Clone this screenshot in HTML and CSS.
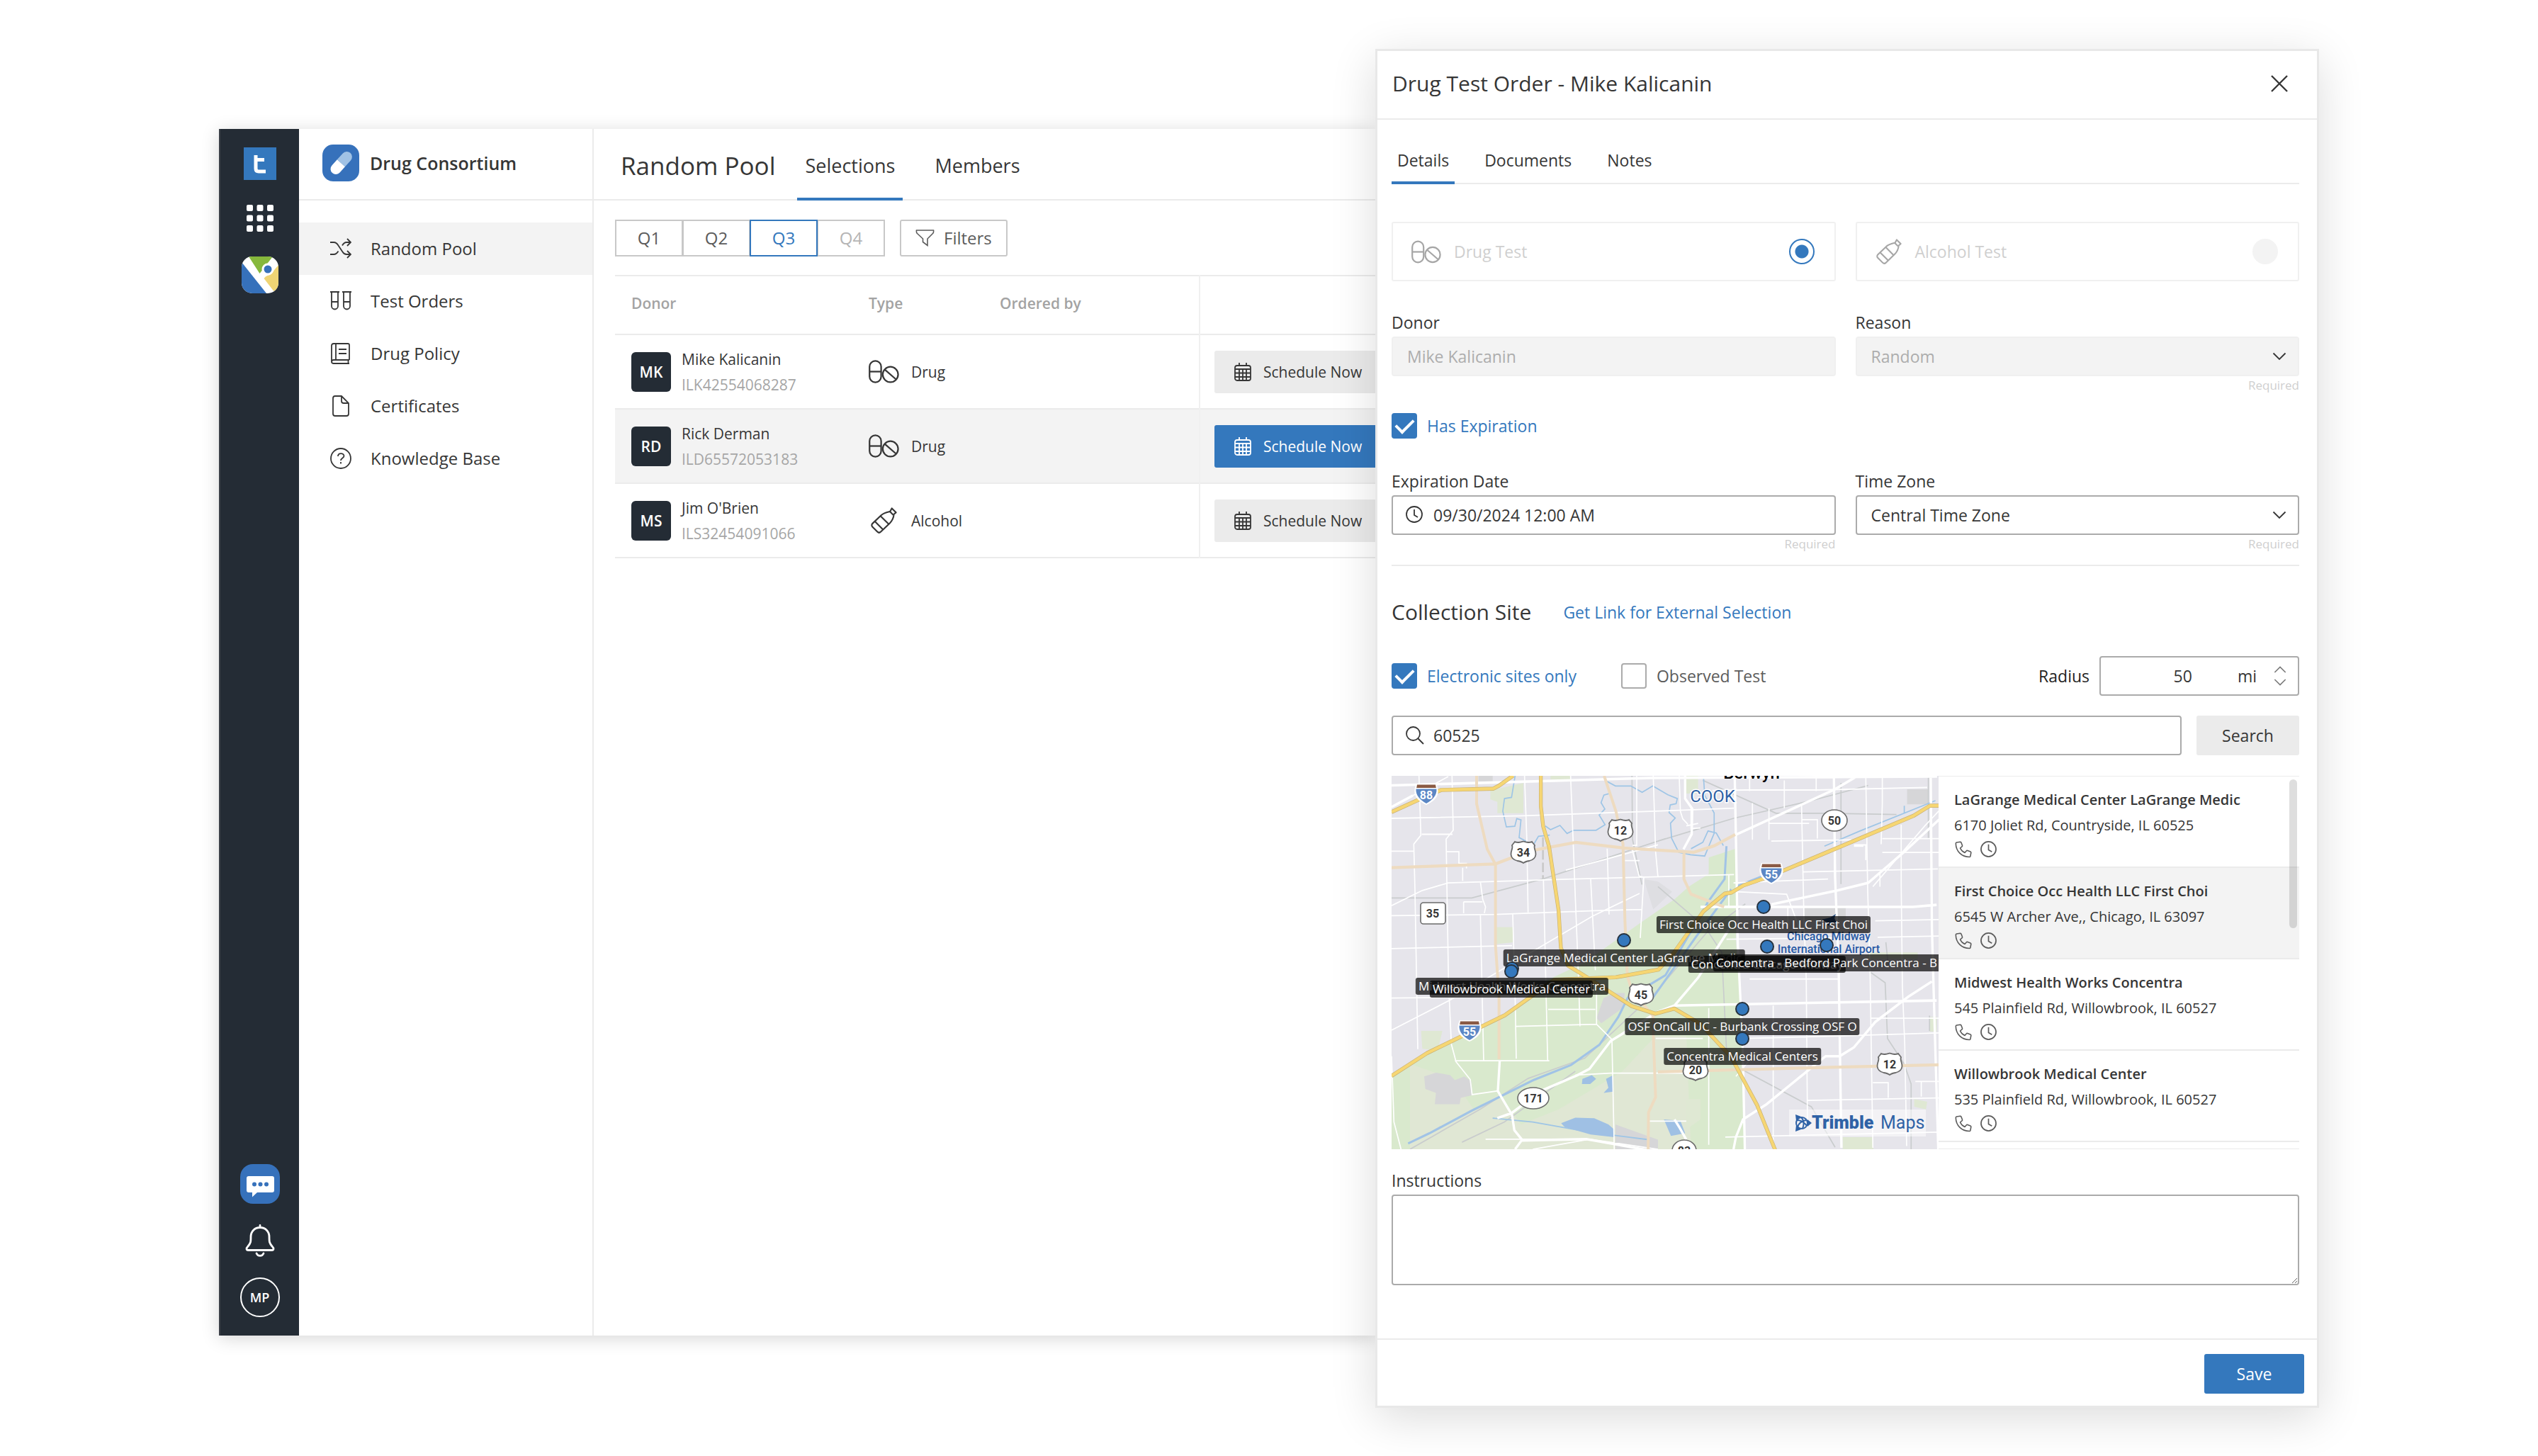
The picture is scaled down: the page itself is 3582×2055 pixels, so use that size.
FILE: index.html
```html
<!DOCTYPE html>
<html lang="en">

<head>
    <meta charset="UTF-8">
    <meta name="viewport" content="width=device-width, initial-scale=1.0">
    <title>Drug Consortium - Random Pool</title>
    <link rel="stylesheet" href="styles.css">
</head>

<body>
    <!-- shared icons -->
    <svg class="sprite" aria-hidden="true">
        <symbol id="i-pills" viewBox="0 0 42 32">
            <g fill="none" stroke="currentColor" stroke-width="2.2">
                <rect x="1.2" y="1.2" width="16" height="29.6" rx="8" />
                <path d="M1.2 16h16" />
                <circle cx="30" cy="20" r="10.6" />
                <path d="M22.5 13.5l15 13" />
            </g>
        </symbol>
        <symbol id="i-bottle" viewBox="0 0 38 38">
            <g fill="none" stroke="currentColor" stroke-width="2.2" stroke-linejoin="round">
                <path d="M30.5 1.5l6 6-3 2.5c-.5 6-2 9-6 13L14.500 35.500c-1.500 1.500-3.500 1.500-5 0L2.500 28.500c-1.500-1.500-1.500-3.500 0-5L15 11.500c4-3.500 7-4 13-5.500z" />
                <path d="M27.500 6l5 5M6 20.500l12 12M14 12.500l12 12" />
            </g>
        </symbol>
        <symbol id="i-calendar" viewBox="0 0 24 26">
            <g fill="none" stroke="currentColor" stroke-width="1.8">
                <rect x="1" y="4" width="22" height="21" rx="3" />
                <path d="M1 9h22M1 14.500h22M1 20h22M7 9v16M12 9v16M17 9v16M7 0v4M17 0v4" />
            </g>
        </symbol>
        <symbol id="i-clock" viewBox="0 0 24 24">
            <g fill="none" stroke="currentColor" stroke-width="1.8">
                <circle cx="12" cy="12" r="11" />
                <path d="M12 5v8l5 3" />
            </g>
        </symbol>
        <symbol id="i-phone" viewBox="0 0 24 24">
            <path d="M2.500 2l5-.8c.8 0 1.200.3 1.500 1l1.500 4c.2.700 0 1.300-.5 1.700L7.500 10c1.300 3 3.500 5.200 6.500 6.500l2.200-2.500c.400-.500 1-.7 1.700-.5l4 1.500c.7.300 1 .8.9 1.500l-.9 5c-.2.700-.7 1-1.400 1C9.500 22.500 1.500 14.500 1.300 3.500c0-.7.500-1.300 1.200-1.500z" fill="none" stroke="currentColor" stroke-width="1.600" stroke-linejoin="round" />
        </symbol>
        <symbol id="i-chevron" viewBox="0 0 20 12">
            <path d="M1.500 1.500l8.500 8.500 8.500-8.500" fill="none" stroke="currentColor" stroke-width="1.800" />
        </symbol>
        <symbol id="s-interstate" viewBox="0 0 36 32">
            <path d="M4 1h28c2 5 3 9 2.500 13-1 8-8 13-16.500 17C9.500 27 2.500 22 1.500 14 1 9 2 6 4 1z" fill="#fff" />
            <path d="M5 2.500h26l.8 4.500H4.200z" fill="#8a5a44" />
            <path d="M3.500 8.500h29c.5 9-5 15-14.500 20.500C8.500 23.500 3 17.500 3.500 8.500z" fill="#5b87c5" />
        </symbol>
        <symbol id="s-us" viewBox="0 0 38 34">
            <path d="M7 2c4 2 7 1 12-.5C24 3 27 4 31 2l4 5c-2 4 2 8 1.500 13-.5 6-5 8-9 9-3 .5-6 1-8.500 3-2.500-2-5.500-2.500-8.500-3-4-1-8.500-3-9-9C1 15 5 11 3 7z" fill="#fff" stroke="#6b6b6b" stroke-width="1.800" />
        </symbol>
    </svg>

    <div class="stage">
        <div class="app">
            <nav class="rail" aria-label="Applications">
                <a href="#" class="rail-link" aria-label="Home">
                    <svg width="46" height="46" viewBox="0 0 46 46">
                        <rect width="46" height="46" fill="#3478bd" />
                        <path d="M17 11v19q0 4 4 4h10M17 17.500h12" fill="none" stroke="#fff" stroke-width="5" />
                    </svg>
                </a>
                <a href="#" class="rail-link" aria-label="All apps">
                    <svg width="38" height="38" viewBox="0 0 38 38" fill="#fff">
                        <rect width="9" height="9" rx="2" /><rect x="14.500" width="9" height="9" rx="2" /><rect x="29" width="9" height="9" rx="2" />
                        <rect y="14.500" width="9" height="9" rx="2" /><rect x="14.500" y="14.500" width="9" height="9" rx="2" /><rect x="29" y="14.500" width="9" height="9" rx="2" />
                        <rect y="29" width="9" height="9" rx="2" /><rect x="14.500" y="29" width="9" height="9" rx="2" /><rect x="29" y="29" width="9" height="9" rx="2" />
                    </svg>
                </a>
                <a href="#" class="rail-link" aria-label="Maps">
                    <svg width="52" height="52" viewBox="0 0 52 52">
                        <clipPath id="tile"><rect width="52" height="52" rx="15" /></clipPath>
                        <g clip-path="url(#tile)">
                            <rect width="52" height="52" fill="#fff" />
                            <path d="M10 0h34L25.500 24z" fill="#86b83c" />
                            <path d="M0 8l35 44H0z" fill="#3671bb" />
                            <path d="M52 12v37l-7-.5L31.500 31q2-3 5-4 6-1 8-6z" fill="#efd474" />
                            <circle cx="37" cy="18" r="8.500" fill="#fff" />
                            <circle cx="37" cy="18" r="5.500" fill="#3671bb" />
                        </g>
                    </svg>
                </a>
                <a href="#" class="rail-link rail-chat" aria-label="Messages">
                    <svg width="56" height="56" viewBox="0 0 56 56">
                        <rect width="56" height="56" rx="18" fill="#3671bb" />
                        <path d="M12 17h33q3 0 3 3v17q0 3-3 3H24l-7 6.500V40h-5q-3 0-3-3V20q0-3 3-3z" fill="#fff" />
                        <g fill="#3671bb"><circle cx="20" cy="28.500" r="3" /><circle cx="28.500" cy="28.500" r="3" /><circle cx="37" cy="28.500" r="3" /></g>
                    </svg>
                </a>
                <a href="#" class="rail-link" aria-label="Notifications">
                    <svg width="42" height="46" viewBox="0 0 42 46" fill="none" stroke="#fff" stroke-width="2.800" stroke-linecap="round">
                        <path d="M21 1.500v3M21 4.500c-7.500 0-13 5.500-13 13 0 7 0 9-4 13.500-3 3-2.500 5.500.5 5.500h33c3 0 3.500-2.500.5-5.500-4-4.500-4-6.500-4-13.500 0-7.500-5.500-13-13-13zM16 41c2 4.500 8 4.500 10 0" />
                    </svg>
                </a>
                <a href="#" class="rail-user">MP</a>
            </nav>

            <aside class="sidebar">
                <div class="brand">
                    <svg width="52" height="52" viewBox="0 0 52 52">
                        <rect width="52" height="52" rx="15" fill="#3671bb" />
                        <g transform="rotate(42 26 26)">
                            <path d="M19 26V14a7.500 7.500 0 0 1 15 0v12z" fill="#a0c2e5" />
                            <path d="M19 26h15v11a7.500 7.500 0 0 1-15 0z" fill="#fff" />
                        </g>
                    </svg>
                    <span>Drug Consortium</span>
                </div>
                <ul class="menu">
                    <li><a href="#" class="active">
                        <svg width="30" height="30" viewBox="0 0 30 30"><path d="M0 6h5c3 0 5 2 6.500 4.500l6 9c1.500 2.500 3 3.500 5.500 3.500h6M0 23h5c3 0 5-2 6.500-4.500M17 10.500C18.500 8 20 6 23 6h6M24 1l5 5-5 5M24 18l5 5-5 5" /></svg>
                        Random Pool</a></li>
                    <li><a href="#">
                        <svg width="30" height="30" viewBox="0 0 30 30"><path d="M0 2h13M17 2h13M2 2v20a4.500 4.500 0 0 0 9 0V2M19 2v20a4.500 4.500 0 0 0 9 0V2M2 16h9M19 16h9" /></svg>
                        Test Orders</a></li>
                    <li><a href="#">
                        <svg width="30" height="30" viewBox="0 0 30 30"><path d="M27 24H5q-3 0-3 2.500T5 29h22M25.500 24v5M27 24V3q0-2-2-2H5Q2 1 2 4v22M8 1v23M12 9h11M12 15h11" /></svg>
                        Drug Policy</a></li>
                    <li><a href="#">
                        <svg width="30" height="30" viewBox="0 0 30 30"><path d="M16 1H7Q4 1 4 4v22q0 3 3 3h16q3 0 3-3V11zM16 1v7q0 3 3 3h7" /></svg>
                        Certificates</a></li>
                    <li><a href="#">
                        <svg width="30" height="30" viewBox="0 0 30 30"><circle cx="15" cy="15" r="14" /><path d="M11 12c0-5 8.500-5 8.500-.5 0 3-4.500 3-4.500 6.500M15 20v2.500" /></svg>
                        Knowledge Base</a></li>
                </ul>
            </aside>

            <main class="main">
                <header class="main-header">
                    <h1>Random Pool</h1>
                    <a href="#" class="main-tab active">Selections</a>
                    <a href="#" class="main-tab">Members</a>
                </header>
                <div class="toolbar">
                    <div class="quarters">
                        <button type="button">Q1</button>
                        <button type="button">Q2</button>
                        <button type="button" class="selected">Q3</button>
                        <button type="button" disabled>Q4</button>
                    </div>
                    <button type="button" class="filters">
                        <svg width="27" height="24" viewBox="0 0 27 24"><path d="M1.500 1h24q.5 3-1 4.500L17 13v9.500l-6.500-5V13L2.500 5.500Q1 4 1.500 1z" fill="none" stroke="currentColor" stroke-width="1.600" /></svg>
                        Filters
                    </button>
                </div>
                <table class="pool">
                    <thead>
                        <tr>
                            <th class="col-donor">Donor</th>
                            <th class="col-type">Type</th>
                            <th class="col-by">Ordered by</th>
                            <th class="col-action" aria-label="Action"></th>
                        </tr>
                    </thead>
                    <tbody>
                        <tr>
                            <td><div class="donor"><span class="avatar">MK</span><span>Mike Kalicanin<br><small>ILK42554068287</small></span></div></td>
                            <td><div class="type"><svg width="43" height="33"><use href="#i-pills" /></svg>Drug</div></td>
                            <td></td>
                            <td class="action"><button type="button" class="schedule"><svg width="24" height="26"><use href="#i-calendar" /></svg>Schedule Now</button></td>
                        </tr>
                        <tr class="current">
                            <td><div class="donor"><span class="avatar">RD</span><span>Rick Derman<br><small>ILD65572053183</small></span></div></td>
                            <td><div class="type"><svg width="43" height="33"><use href="#i-pills" /></svg>Drug</div></td>
                            <td></td>
                            <td class="action"><button type="button" class="schedule primary"><svg width="24" height="26"><use href="#i-calendar" /></svg>Schedule Now</button></td>
                        </tr>
                        <tr>
                            <td><div class="donor"><span class="avatar">MS</span><span>Jim O'Brien<br><small>ILS32454091066</small></span></div></td>
                            <td><div class="type"><svg width="43" height="37"><use href="#i-bottle" /></svg>Alcohol</div></td>
                            <td></td>
                            <td class="action"><button type="button" class="schedule"><svg width="24" height="26"><use href="#i-calendar" /></svg>Schedule Now</button></td>
                        </tr>
                    </tbody>
                </table>
            </main>
        </div>

        <form class="drawer" aria-labelledby="drawer-title">
            <header class="drawer-header">
                <h2 id="drawer-title">Drug Test Order - Mike Kalicanin</h2>
                <button type="button" class="close" aria-label="Close">
                    <svg width="24" height="24" viewBox="0 0 24 24"><path d="M1 1l22 22M23 1L1 23" stroke="currentColor" stroke-width="2.400" /></svg>
                </button>
            </header>

            <div class="drawer-body">
                <nav class="tabs">
                    <a href="#" class="active">Details</a>
                    <a href="#">Documents</a>
                    <a href="#">Notes</a>
                </nav>

                <div class="row cards">
                    <label class="card">
                        <svg width="42" height="33"><use href="#i-pills" /></svg>
                        <span>Drug Test</span>
                        <input type="radio" name="test" checked>
                    </label>
                    <label class="card">
                        <svg width="38" height="36"><use href="#i-bottle" /></svg>
                        <span>Alcohol Test</span>
                        <input type="radio" name="test" disabled>
                    </label>
                </div>

                <div class="row donor-row">
                    <div class="field">
                        <label for="donor">Donor</label>
                        <input type="text" id="donor" value="Mike Kalicanin" disabled>
                    </div>
                    <div class="field">
                        <label for="reason">Reason</label>
                        <div class="control">
                            <select id="reason" disabled>
                                <option>Random</option>
                            </select>
                            <svg class="chevron" width="20" height="12"><use href="#i-chevron" /></svg>
                        </div>
                        <span class="hint">Required</span>
                    </div>
                </div>

                <label class="check expiration-check"><input type="checkbox" checked><span>Has Expiration</span></label>

                <div class="row">
                    <div class="field">
                        <label for="expiration">Expiration Date</label>
                        <div class="control with-icon">
                            <svg class="lead" width="24" height="24"><use href="#i-clock" /></svg>
                            <input type="text" id="expiration" value="09/30/2024 12:00 AM">
                        </div>
                        <span class="hint">Required</span>
                    </div>
                    <div class="field">
                        <label for="zone">Time Zone</label>
                        <div class="control">
                            <select id="zone">
                                <option>Central Time Zone</option>
                            </select>
                            <svg class="chevron" width="20" height="12"><use href="#i-chevron" /></svg>
                        </div>
                        <span class="hint">Required</span>
                    </div>
                </div>

                <section class="site">
                    <div class="site-title">
                        <h3>Collection Site</h3>
                        <a href="#">Get Link for External Selection</a>
                    </div>
                    <div class="site-options">
                        <label class="check"><input type="checkbox" checked><span>Electronic sites only</span></label>
                        <label class="check"><input type="checkbox"><span>Observed Test</span></label>
                        <label for="radius" class="radius-label">Radius</label>
                        <div class="radius">
                            <input type="number" id="radius" value="50">
                            <span>mi</span>
                            <div class="steps">
                                <button type="button" aria-label="Increase"><svg class="up" width="18" height="12"><use href="#i-chevron" /></svg></button>
                                <button type="button" aria-label="Decrease"><svg width="18" height="12"><use href="#i-chevron" /></svg></button>
                            </div>
                        </div>
                    </div>
                    <div class="search-row">
                        <div class="control with-icon">
                            <svg class="lead" width="26" height="26" viewBox="0 0 26 26"><path d="M17.500 17.500L25 25M20 10.500a9.500 9.500 0 1 1-19 0 9.500 9.500 0 0 1 19 0z" fill="none" stroke="currentColor" stroke-width="1.800" /></svg>
                            <input type="text" aria-label="Zip code" value="60525">
                        </div>
                        <button type="button" class="search">Search</button>
                    </div>

                    <div class="finder">
                        <div class="map">
                            <svg class="map-art" viewBox="0 0 772 527" preserveAspectRatio="xMidYMid slice">
                                <rect width="772" height="527" fill="#e6e5eb" />
                                <g transform="scale(.3333 .3571) translate(-42 -42)" fill="none">
                                    <!-- green areas -->
                                    <path d="M42 1230L200 1130 330 1080 540 980 640 910 700 850 860 780 1100 620 1240 530 1300 480 1385 430V365L1500 330V690L1520 950 1538 1518H42z" fill="#d9e9cd" />
                                    <path d="M120 1180l180 60 90 120 110-60 90 120 160-60 270-150 140-140h130l20 448H120z" fill="#e0e7d4" />
                                    <path d="M460 100l140-30v120H490V145l-30-10zM715 42h85v15h-85zM480 640h75v60l-75 8zM167 1050h90l-20 80-65-10zM1952 1470h130v48h-130zM2255 1320l55 10-5 30-50-10zM2320 995h30v58h-30zM2060 740h210v25h-210zM1290 1320h60v80l-60 40zM1290 42h50v70h-50z" fill="#dfe8d3" />
                                    <path d="M180 1230l50-15 60 10 20 20 40-15 30 20v55l-45 10-5 25H225l5-45-45-15zM910 1000l30-80 50-20h40l-10 60-90 60zM1790 555h175v60h-175zM2225 95h90v60h-90zM410 42h60v22h-60zM990 1420l180 60v38H990z" fill="#d6d6d8" />
                                    <path d="M1110 450l60 10 60 40-80 70z" fill="#dedee2" />
                                    <!-- railways -->
                                    <path d="M42 525h340l300-75 520-160M1060 42l2 250 40 180M1170 300l320-90 330-70 240-60M1360 60l310 130h220l290 5M1170 480l200 160 70 100 20 380M2072 820l60 40 10 220 70 100 30 80v260M2145 790l-10-90M2320 1050v-60M1520 1200l300 150 100 160M1945 70v400M2315 42v250M120 1518l300-160 200-120 240-80 300-260 220-240 160-110M340 1490l180-80 300-200" stroke="#c9cccd" stroke-width="5" />
                                    <path d="M683 285v165" stroke="#c6c6c6" stroke-width="7" stroke-dasharray="38 12" />
                                    <!-- waterways -->
                                    <path d="M565 42l-15 85-30 5-7 50 15 62 36-3 8-30 18 5-8 70 60 30 22-35 48-5M693 240l22 15 40-17 30 32 28-13h95l38-22-25-38 24-24-16-25 12-30 30-8M950 62l40 20h65l48 25 45-25 64 35 40 15-5 20-25 5-5 30 26 22-20 20 5 60 30 55 50 10 60 5 40-90 0-80-40-70-5-70M1310 330l50-25 22-45 35 8 30 50M2345 140l-320 120-150 60M2213 160v30M470 1395l170 15 240 40 250 30" stroke="#9ec5e6" stroke-width="5" />
                                    <path d="M1460 320l-8 130-70 90-30 50-150 240-160 90-40 75-80 110-120 80-160 60-260 120-180 90-90 40M1500 480l110-40M1480 490l-150 190-190 250" stroke="#a1c3e6" stroke-width="9" />
                                    <path d="M760 1415l60-22 80 2 60 25 25 20v30l-100-10-110-30zM850 1240l40-15 18 15-25 20h-35zM950 1240l30-15v65l-40 5 20-20zM1195 1400l70 5 20 50-60 10z" fill="#9fc0e4" />
                                    <!-- streets -->
                                    <g stroke="#fff" stroke-width="5">
                                        <path d="M158 42l8 235-30 35 5 180 12 630M298 42l5 215-30 35 10 560 12 250 20 70 60 70 8 60 110-15M605 42l10 260 5 280M800 42l20 480 12 280 8 230M42 210l560-10 600-20 290-10M42 555l130-60 110-30 530-15 390-10 290-8M42 595l440-5 420-15 200-5M42 725l510-12M42 920l500-5M42 340h95M170 273h130M275 342h52v46h32v20M343 405v52M418 460l10 70 12 30-5 25M347 540h80M347 540v45M418 590l14 580M555 590l10 320 5 250M885 450l20 360M955 330l8 260M685 450l18 720M310 1168h400M570 1032l340-8 65 60M705 965h200M910 900v125M975 1084l10 436M820 1225l150-8h370M1080 42v275h-18M1030 377h62M1060 330l30 108 20 5-15 240M1150 42l10 300 10 100M1130 1407h160M1160 1080h200M640 1518l240-40 290 40M440 1478h440M42 1150l10 260 30 108M42 1047l250-120 600-330 200-90M780 415l390-100M42 165l240-120" />
                                        <path d="M1340 230l-50 10M1400 100l140-2h300l470-10M1558 42v60M1570 150v145M1640 170v125M1705 60v110M1840 42v60M1778 160l10 440 10 250 5 560M1640 230h170M1780 215h65v75M2050 42l8 450 10 320 12 700M2120 42v110l-5 160M2260 1250h100M2000 315h50v60M2110 430v50M1650 300l340-5M1785 422l570-12M1490 465l400-15M2200 235v240l5 400 10 230 8 400M2040 320h-40M1455 1470l910-20M2090 615l270-5M2100 680l260-5M2285 1310v-60h70M2080 1255h65v60M1558 845h380M1658 950v570M1660 1160h150M1800 1325l560-10M1460 688l450-5M1470 560v-125M1310 170v80l40-2M1260 42l5 140 10 30 22 22M2080 480l220-240 60-60M1505 500l210 10 60 150M1540 1080l400-10 420-12M2070 1000h290M2120 290h240M2120 345h240M1590 1130l-90 100M1385 960v540M1720 560v80" />
                                    </g>
                                    <g stroke="#fff" stroke-width="10">
                                        <path d="M42 80l1110-30 1200-5M42 165l90-45M1285 42v90l30 40-2 100-35 60M1495 42l5 240 8 430 20 380 10 430M1915 42l5 400 15 350 12 720M2325 42l5 600 12 400 15 480M1500 275l420-180 90-50M1350 560h900l100-8M1650 550l280-55 130-30 150-120 150-130M1240 950l1110-20M1240 950l-70 25-200 115-90 110-50 25-150 60-130 90-60 20M500 1168l-8 120 60 95 10 60 35 40 270-5 300 50M595 1480l-30 38M1240 950l100-110 130-190M2330 855l-100 60-140 100-90 100-60 35h-60l-250 190-100 60-30 70-10 48M1240 1400l20 30 30 50" />
                                    </g>
                                    <!-- highways -->
                                    <path d="M402 42v110l45 180 35 60v320l15 200v250M42 405l440-15 140-50 200-35 200 22 300 17 85-25 90-45M942 42l50 140 30 130 8 300 10 220 20 60 90 100v60l10 260-30 60-2 184M1280 340v110l30 60 140 50M1170 1212l730-18 460-10" stroke="#eedbc0" stroke-width="12" />
                                    <g stroke-linejoin="round">
                                        <path d="M42 185l130-55 80-32 220-5 25-12 60-40M674 42v120l10 80 25 80 40 250 10 150 30 70 70 40 200 120 100 30 80-20 110 60 130 130 110 190 80 185M42 1228l150-90 330-150 120-80 90-60 260-10 180-30 60-60 130-170 90-70 30-5 50-28 110-35 610-240 70-40h40" stroke="#c9b175" stroke-width="16" />
                                        <path d="M42 185l130-55 80-32 220-5 25-12 60-40M674 42v120l10 80 25 80 40 250 10 150 30 70 70 40 200 120 100 30 80-20 110 60 130 130 110 190 80 185M42 1228l150-90 330-150 120-80 90-60 260-10 180-30 60-60 130-170 90-70 30-5 50-28 110-35 610-240 70-40h40" stroke="#f6d673" stroke-width="12" />
                                    </g>
                                </g>
                                <!-- road numbers -->
                                <g class="road">
                                    <use href="#s-interstate" x="31" y="10" width="36" height="32" /><text x="49" y="33" class="light">88</text>
                                    <use href="#s-interstate" x="92" y="344" width="36" height="32" /><text x="110" y="367" class="light">55</text>
                                    <use href="#s-interstate" x="518" y="122" width="36" height="32" /><text x="536" y="145" class="light">55</text>
                                    <use href="#s-us" x="167" y="91" width="38" height="34" /><text x="186" y="114">34</text>
                                    <use href="#s-us" x="304" y="60" width="38" height="34" /><text x="323" y="83">12</text>
                                    <use href="#s-us" x="333" y="292" width="38" height="34" /><text x="352" y="315">45</text>
                                    <use href="#s-us" x="410" y="398" width="38" height="34" /><text x="429" y="421">20</text>
                                    <use href="#s-us" x="684" y="390" width="38" height="34" /><text x="703" y="413">12</text>
                                    <g fill="#fff" stroke="#6b6b6b" stroke-width="1.600">
                                        <ellipse cx="200" cy="455" rx="22" ry="15" />
                                        <ellipse cx="625" cy="63" rx="18" ry="15" />
                                        <ellipse cx="413" cy="529" rx="17" ry="15" />
                                        <rect x="41" y="179" width="35" height="30" rx="4" />
                                    </g>
                                    <text x="200" y="461">171</text>
                                    <text x="625" y="69">50</text>
                                    <text x="413" y="535">83</text>
                                    <text x="58" y="200">35</text>
                                </g>
                                <path d="M607 203l12-3 8-5-2 6 3 6-8 1-4 4-1-5z" fill="#2c5282" />
                                <text class="town" x="508" y="4">Berwyn</text>
                                <text class="county" x="453" y="37">COOK</text>
                                <text class="airport" x="617" y="232">Chicago Midway</text>
                                <text class="airport" x="617" y="250">International Airport</text>
                                <rect x="561" y="471" width="193" height="38" fill="#fff" fill-opacity=".5" />
                                <g fill="none" stroke="#2f62a6" stroke-width="2">
                                    <circle cx="579" cy="490" r="8" />
                                    <path d="M572 486q8 0 14 8M573 496q2-8 12-10M578 482q6 6 2 16" />
                                </g>
                                <path d="M570 478l8 3-7 6zM593 490l-6-5v10zM570 502l8-3-7-6z" fill="#2f62a6" />
                                <text class="trimble" x="593" y="498">Trimble</text>
                                <text class="maps" x="690" y="498">Maps</text>
                            </svg>
                            <div class="pin pin-lagrange"><span>LaGrange Medical Center LaGrange Medic</span></div>
                            <div class="pin pin-midwest"><span>Midwest Health Works Concentra</span></div>
                            <div class="pin pin-willowbrook"><span>Willowbrook Medical Center</span></div>
                            <div class="pin pin-first"><span>First Choice Occ Health LLC First Choi</span></div>
                            <div class="pin pin-midway"><span>Concentra Chicago Midway</span></div>
                            <div class="pin pin-bedford"><span>Concentra - Bedford Park Concentra - B</span></div>
                            <div class="pin pin-osf"><span>OSF OnCall UC - Burbank Crossing OSF O</span></div>
                            <div class="pin pin-centers"><span>Concentra Medical Centers</span></div>
                        </div>
                        <ul class="sites">
                            <li>
                                <strong>LaGrange Medical Center LaGrange Medic</strong>
                                <span>6170 Joliet Rd, Countryside, IL 60525</span>
                                <div class="site-icons"><svg width="24" height="24"><use href="#i-phone" /></svg><svg width="23" height="23"><use href="#i-clock" /></svg></div>
                            </li>
                            <li class="current">
                                <strong>First Choice Occ Health LLC First Choi</strong>
                                <span>6545 W Archer Ave,, Chicago, IL 63097</span>
                                <div class="site-icons"><svg width="24" height="24"><use href="#i-phone" /></svg><svg width="23" height="23"><use href="#i-clock" /></svg></div>
                            </li>
                            <li>
                                <strong>Midwest Health Works Concentra</strong>
                                <span>545 Plainfield Rd, Willowbrook, IL 60527</span>
                                <div class="site-icons"><svg width="24" height="24"><use href="#i-phone" /></svg><svg width="23" height="23"><use href="#i-clock" /></svg></div>
                            </li>
                            <li>
                                <strong>Willowbrook Medical Center</strong>
                                <span>535 Plainfield Rd, Willowbrook, IL 60527</span>
                                <div class="site-icons"><svg width="24" height="24"><use href="#i-phone" /></svg><svg width="23" height="23"><use href="#i-clock" /></svg></div>
                            </li>
                        </ul>
                    </div>
                </section>

                <div class="field instructions">
                    <label for="instructions">Instructions</label>
                    <textarea id="instructions"></textarea>
                </div>
            </div>

            <footer class="drawer-footer">
                <button type="submit" class="save">Save</button>
            </footer>
        </form>
    </div>
</body>

</html>
```

FILE: styles.css
```css
* {
    box-sizing: border-box;
}

body {
    margin: 0;
    background: #fff;
    color: #363636;
    font-family: "Open Sans", "Noto Sans", sans-serif;
    font-size: 23px;
    line-height: 32px;
}

a {
    color: inherit;
    text-decoration: none;
}

button,
input,
select,
textarea {
    font: inherit;
    color: inherit;
}

button {
    border: none;
    border-radius: 3px;
    background: none;
    padding: 0;
    cursor: pointer;
}

svg {
    flex: none;
    display: block;
}

h1,
h2,
h3 {
    margin: 0;
    font-weight: 400;
}

ul {
    list-style: none;
    margin: 0;
    padding: 0;
}

.sprite {
    display: none;
}

.stage {
    display: grid;
    grid-template-columns: minmax(0, 1632fr) minmax(0, 1332fr);
    padding: 69px 309px;
}

/* application window */
.app {
    display: flex;
    margin: 113px 0 102px;
    overflow: hidden;
    background: #fff;
    box-shadow: 0 4px 24px rgba(0, 0, 0, 0.16);
}

.rail {
    flex: none;
    width: 113px;
    display: flex;
    flex-direction: column;
    align-items: center;
    padding: 26px 0;
    gap: 35px;
    background: #242c35;
    border-left: 2px solid #3b4048;
}

.rail-chat {
    margin-top: auto;
}

.rail-chat,
.rail-chat + .rail-link {
    margin-bottom: -6px;
}

.rail-user {
    width: 56px;
    height: 56px;
    border: 2px solid #fff;
    border-radius: 50%;
    color: #fff;
    font-size: 18px;
    font-weight: 600;
    line-height: 52px;
    text-align: center;
}

.sidebar {
    flex: none;
    width: 416px;
    border-right: 2px solid #ebebeb;
}

.brand {
    height: 101px;
    display: flex;
    align-items: center;
    gap: 15px;
    padding: 0 33px 3px;
    border-bottom: 2px solid #ebebeb;
    font-size: 25px;
    font-weight: 600;
}

.menu {
    padding-top: 31px;
}

.menu a {
    display: flex;
    align-items: center;
    gap: 27px;
    height: 74px;
    padding-left: 44px;
    font-size: 24px;
}

.menu a.active {
    background: #f3f3f3;
}

.menu svg {
    fill: none;
    stroke: #363636;
    stroke-width: 1.8;
}

.main {
    flex: 1;
    min-width: 0;
    overflow: hidden;
}

.main-header {
    display: flex;
    height: 101px;
    padding-left: 38px;
    border-bottom: 2px solid #ebebeb;
    line-height: 104px;
}

.main-header h1 {
    margin-right: 31px;
    font-size: 35px;
}

.main-tab {
    height: 101px;
    padding: 0 11px;
    margin-right: 34px;
    font-size: 27px;
}

.main-tab.active {
    border-bottom: 4px solid #3478bd;
}

.toolbar {
    display: flex;
    gap: 22px;
    padding: 27px 30px 26px;
    color: #5c5c5c;
    font-size: 24px;
}

.quarters {
    display: flex;
}

.quarters button {
    width: 96px;
    height: 52px;
    border: 2px solid #c8c8c8;
    border-radius: 0;
    margin-right: -1px;
}

.quarters .selected {
    position: relative;
    border-color: #3478bd;
    color: #3478bd;
}

.quarters button:disabled {
    color: #b5b5b5;
}

.filters {
    display: flex;
    align-items: center;
    gap: 13px;
    height: 52px;
    padding: 0 20px;
    border: 2px solid #c8c8c8;
}

.pool {
    table-layout: fixed;
    width: 1100px;
    margin-left: 30px;
    border-collapse: collapse;
    font-size: 21px;
}

.pool tr {
    border-top: 2px solid #ebebeb;
    border-bottom: 2px solid #ebebeb;
}

.pool th {
    height: 83px;
    padding: 0 0 6px 23px;
    color: #a3a3a3;
    font-weight: 600;
    text-align: left;
}

.pool td {
    height: 105px;
    padding: 0 0 0 23px;
}

.pool .action {
    padding-left: 20px;
}

.pool th:last-child,
.pool td:last-child {
    border-left: 2px solid #f0f0f0;
}

.pool .current {
    background: #f3f3f3;
}

.col-donor {
    width: 335px;
}

.col-type {
    width: 185px;
}

.col-by {
    width: 305px;
}

.donor {
    display: flex;
    align-items: center;
    gap: 15px;
    line-height: 36px;
}

.donor small {
    color: #a6a6a6;
    font-size: 21px;
}

.avatar {
    width: 56px;
    height: 56px;
    border-radius: 6px;
    background: #242c35;
    color: #fff;
    font-size: 21px;
    font-weight: 600;
    line-height: 56px;
    text-align: center;
}

.type {
    display: flex;
    align-items: center;
    gap: 17px;
}

.schedule {
    display: flex;
    align-items: center;
    gap: 17px;
    height: 60px;
    padding: 0 28px;
    background: #ebebeb;
    white-space: nowrap;
}

.schedule.primary {
    background: #3478bd;
    color: #fff;
}

/* order drawer */
.drawer {
    position: relative;
    background: #fff;
    border: 3px solid #e8e8e8;
    box-shadow: 0 14px 60px rgba(0, 0, 0, 0.14);
}

.drawer-header {
    display: flex;
    align-items: center;
    justify-content: space-between;
    height: 97px;
    padding: 0 41px 3px 21px;
    border-bottom: 2px solid #ebebeb;
}

.drawer-header h2 {
    font-size: 30px;
}

.drawer-body {
    padding: 0 25px 75px 20px;
}

.tabs {
    display: flex;
    gap: 34px;
    height: 91px;
    border-bottom: 2px solid #ebebeb;
    line-height: 114px;
}

.tabs a {
    height: 91px;
    padding: 0 8px;
}

.tabs .active {
    border-bottom: 4px solid #3478bd;
}

.row {
    display: grid;
    grid-template-columns: minmax(0, 1fr) minmax(0, 1fr);
    gap: 28px;
}

.cards {
    margin: 53px 0 42px;
}

.card {
    display: flex;
    align-items: center;
    gap: 18px;
    height: 84px;
    padding: 0 28px 0 26px;
    border: 2px solid #f0f0f0;
    border-radius: 3px;
    color: #cfcfcf;
}

.card svg {
    color: #a6a6a6;
}

input[type="radio"] {
    appearance: none;
    width: 36px;
    height: 36px;
    margin: 0 0 0 auto;
    border: 2px solid #3478bd;
    border-radius: 50%;
    background: radial-gradient(circle, #3478bd 9px, #fff 10px);
}

input[type="radio"]:disabled {
    border-color: #f3f3f3;
    background: #f3f3f3;
}

.field {
    display: flex;
    flex-direction: column;
}

.field label {
    margin-bottom: 4px;
}

.field input,
.field select,
.search-row input {
    width: 100%;
    height: 56px;
    padding: 0 20px;
    border: 2px solid #ababab;
    border-radius: 4px;
    background: #fff;
    appearance: none;
}

.field input:disabled,
.field select:disabled {
    border-color: #f0f0f0;
    background: #f3f3f3;
    color: #adadad;
    opacity: 1;
}

.control {
    position: relative;
}

.chevron {
    position: absolute;
    right: 18px;
    top: 22px;
}

.lead {
    position: absolute;
    left: 20px;
    top: 15px;
}

.control.with-icon input {
    padding-left: 57px;
}

.hint {
    height: 27px;
    color: #cfcfcf;
    font-size: 17px;
    line-height: 26px;
    text-align: right;
}

.check {
    display: flex;
    align-items: center;
    gap: 14px;
    color: #5c5c5c;
}

.check:has(:checked) {
    color: #3478bd;
}

.expiration-check {
    height: 36px;
    margin: 25px 0 44px;
}

input[type="checkbox"] {
    appearance: none;
    width: 36px;
    height: 36px;
    margin: 0;
    border: 2px solid #ababab;
    border-radius: 4px;
    display: grid;
    place-items: center;
}

input[type="checkbox"]:checked {
    border-color: #3478bd;
    background: #3478bd;
}

input[type="checkbox"]:checked::before {
    content: "";
    width: 21px;
    height: 11px;
    margin-bottom: 6px;
    border: solid #fff;
    border-width: 0 0 4px 4px;
    transform: rotate(-45deg);
}

.site {
    margin-top: 15px;
    padding-top: 45px;
    border-top: 2px solid #ebebeb;
}

.site-title {
    display: flex;
    align-items: center;
    gap: 45px;
    line-height: 40px;
}

.site-title h3 {
    font-size: 30px;
}

.site-title a {
    color: #3478bd;
}

.site-options {
    display: flex;
    align-items: center;
    margin: 42px 0 28px;
}

.site-options .check {
    margin-right: 63px;
}

.radius-label {
    margin: 0 14px 0 auto;
    color: #1f1f1f;
}

.radius {
    display: flex;
    align-items: center;
    justify-content: flex-end;
    gap: 24px;
    width: 282px;
    height: 56px;
    padding-right: 16px;
    border: 2px solid #ababab;
    border-radius: 4px;
}

.radius input {
    appearance: textfield;
    width: 80px;
    margin-right: 40px;
    padding: 0;
    border: none;
    background: none;
    text-align: right;
}

.radius input::-webkit-inner-spin-button {
    appearance: none;
    display: none;
}

.steps {
    display: flex;
    flex-direction: column;
    gap: 6px;
    color: #7a7a7a;
}

.steps button {
    height: 12px;
}

.steps .up {
    transform: rotate(180deg);
}

.search-row {
    display: flex;
    gap: 21px;
    margin-bottom: 29px;
}

.search-row .control {
    flex: 1;
}

.search {
    width: 145px;
    height: 56px;
    background: #ebebeb;
}

.finder {
    display: grid;
    grid-template-columns: minmax(0, 772fr) minmax(0, 509fr);
    height: 527px;
}

.map {
    position: relative;
    overflow: hidden;
}

.map-art {
    width: 100%;
    height: 100%;
    font-family: Roboto, sans-serif;
    text-anchor: middle;
}

.road text {
    font-size: 16px;
    font-weight: 700;
    fill: #363636;
}

.road .light {
    fill: #fff;
}

.town {
    font-size: 24px;
    font-weight: 500;
}

.county {
    font-size: 24px;
    fill: #2f62a6;
    stroke: #fff;
    stroke-width: 3px;
    paint-order: stroke;
}

.airport {
    font-size: 16px;
    font-weight: 500;
    fill: #2759a5;
}

.trimble,
.maps {
    font-size: 25px;
    fill: #2f62a6;
    text-anchor: start;
}

.trimble {
    font-weight: 900;
}

.pin {
    position: absolute;
    width: 20px;
    height: 20px;
    margin: -10px 0 0 -10px;
    border: 2px solid #26313d;
    border-radius: 50%;
    background: #3478bd;
}

.pin span {
    position: absolute;
    top: 21px;
    left: 50%;
    transform: translateX(-50%);
    padding: 0 4px;
    border-radius: 3px;
    background: rgba(0, 0, 0, 0.7);
    color: #fff;
    font-size: 17px;
    line-height: 24px;
    white-space: nowrap;
}

.pin-lagrange {
    left: 328px;
    top: 232px;
}

.pin-midwest {
    left: 170px;
    top: 272px;
}

.pin-willowbrook {
    left: 169px;
    top: 276px;
}

.pin-first {
    left: 525px;
    top: 185px;
}

.pin-midway {
    left: 530px;
    top: 241px;
}

.pin-bedford {
    left: 614px;
    top: 239px;
}

.pin-osf {
    left: 495px;
    top: 329px;
}

.pin-centers {
    left: 495px;
    top: 371px;
}

.sites {
    position: relative;
    border: solid #ebebeb;
    border-width: 1px 0;
}

/* scrollbar thumb */
.sites::after {
    content: "";
    position: absolute;
    top: 4px;
    right: 3px;
    width: 11px;
    height: 210px;
    border-radius: 6px;
    background: rgba(0, 0, 0, 0.13);
}

.sites li {
    height: 129px;
    padding: 15px 22px 0;
    border-bottom: 2px solid #ebebeb;
    font-size: 20px;
    line-height: 36px;
}

.sites .current {
    background: #f3f3f3;
}

.sites strong,
.sites span {
    display: block;
    font-weight: 400;
    white-space: nowrap;
}

.sites strong {
    font-weight: 600;
}

.site-icons {
    display: flex;
    gap: 12px;
    padding: 4px 1px;
    color: #5c5c5c;
}

.instructions {
    margin-top: 28px;
}

.instructions textarea {
    height: 128px;
    border: 2px solid #ababab;
    border-radius: 4px;
    resize: vertical;
}

.drawer-footer {
    display: flex;
    justify-content: flex-end;
    padding: 20px 18px 17px;
    border-top: 2px solid #ebebeb;
}

.save {
    width: 141px;
    height: 56px;
    background: #3478bd;
    color: #fff;
}
```
